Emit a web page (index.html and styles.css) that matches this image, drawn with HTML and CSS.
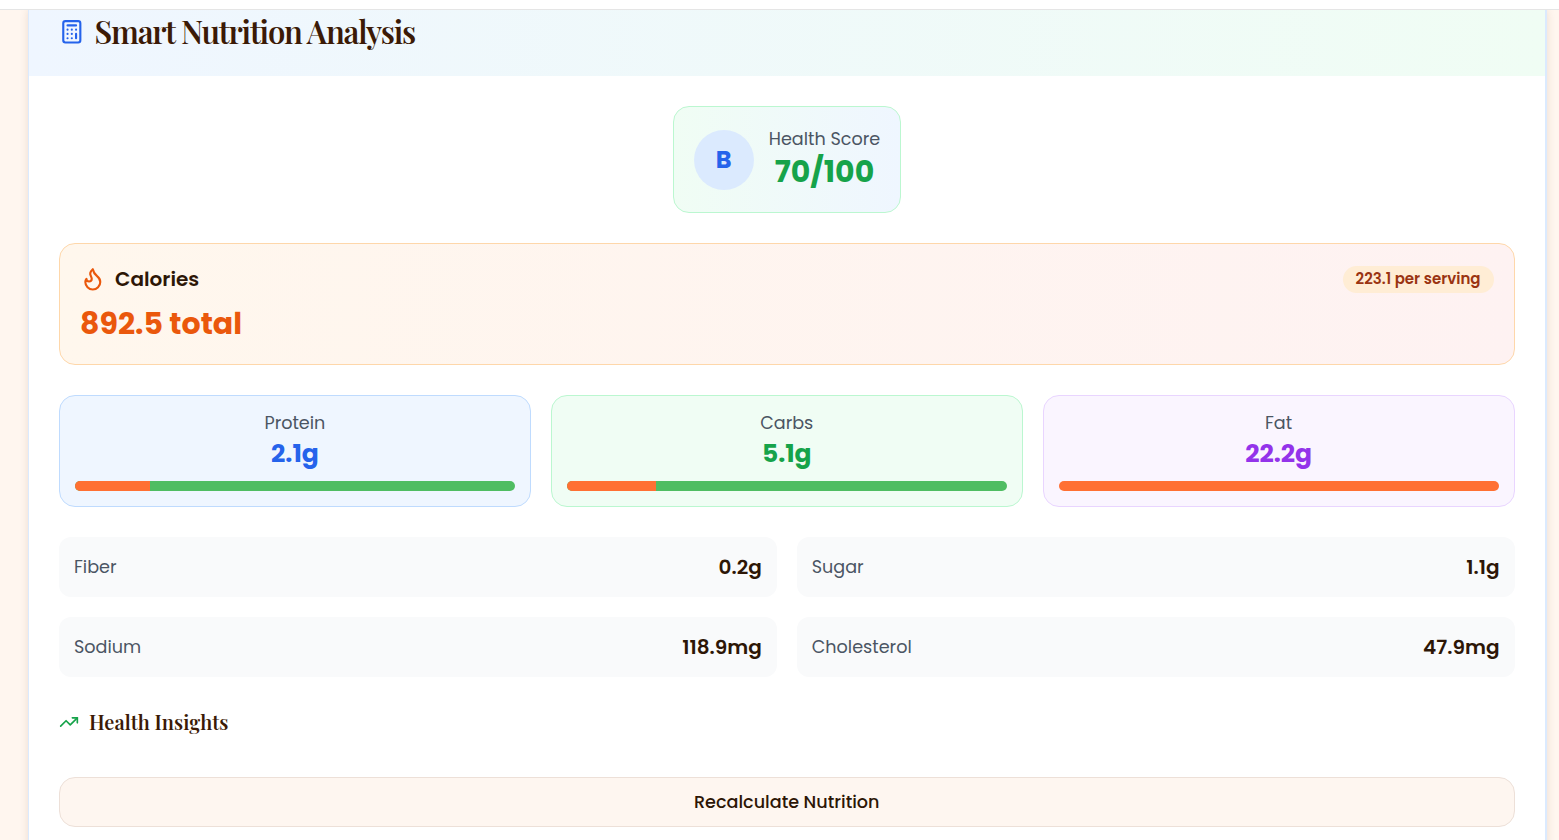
FILE: index.html
```html
<!DOCTYPE html>
<html lang="en">
<head>
  <meta charset="UTF-8" />
  <meta name="viewport" content="width=device-width, initial-scale=1" />
  <title>Smart Nutrition Analysis</title>
  <link rel="stylesheet" href="styles.css">
</head>
<body>
  <div class="topbar"></div>
  <main class="page">
    <section class="card">
      <header class="card-head">
        <svg class="calc-icon" viewBox="0 0 24 24" fill="none" stroke="currentColor" stroke-width="2" stroke-linecap="round" stroke-linejoin="round">
          <rect x="4" y="2" width="16" height="20" rx="2"/>
          <line x1="8" y1="6" x2="16" y2="6"/>
          <line x1="16" y1="14" x2="16" y2="18"/>
          <path d="M16 10h.01"/><path d="M12 10h.01"/><path d="M8 10h.01"/>
          <path d="M12 14h.01"/><path d="M8 14h.01"/><path d="M12 18h.01"/><path d="M8 18h.01"/>
        </svg>
        <h2>Smart Nutrition Analysis</h2>
      </header>

      <div class="card-body">
        <div class="score-wrap">
          <div class="score">
            <div class="grade">B</div>
            <div class="score-text">
              <div class="score-label">Health Score</div>
              <div class="score-value">70/100</div>
            </div>
          </div>
        </div>

        <div class="calories">
          <div class="calories-top">
            <div class="calories-title">
              <svg class="flame-icon" viewBox="0 0 24 24" fill="none" stroke="currentColor" stroke-width="2" stroke-linecap="round" stroke-linejoin="round">
                <path d="M8.5 14.5A2.5 2.5 0 0 0 11 12c0-1.38-.5-2-1-3-1.072-2.143-.224-4.054 2-6 .5 2.5 2 4.9 4 6.5 2 1.6 3 3.5 3 5.5a7 7 0 1 1-14 0c0-1.153.433-2.294 1-3a2.5 2.5 0 0 0 2.5 2.5z"/>
              </svg>
              <span>Calories</span>
            </div>
            <span class="pill">223.1 per serving</span>
          </div>
          <div class="calories-total">892.5 total</div>
        </div>

        <div class="macros">
          <div class="macro macro-protein">
            <div class="macro-label">Protein</div>
            <div class="macro-value">2.1g</div>
            <div class="bar"><div class="bar-fill" style="width: 17%"></div></div>
          </div>
          <div class="macro macro-carbs">
            <div class="macro-label">Carbs</div>
            <div class="macro-value">5.1g</div>
            <div class="bar"><div class="bar-fill" style="width: 20.3%"></div></div>
          </div>
          <div class="macro macro-fat">
            <div class="macro-label">Fat</div>
            <div class="macro-value">22.2g</div>
            <div class="bar"><div class="bar-fill" style="width: 100%"></div></div>
          </div>
        </div>

        <div class="details">
          <div class="detail"><span class="detail-name">Fiber</span><span class="detail-value">0.2g</span></div>
          <div class="detail"><span class="detail-name">Sugar</span><span class="detail-value">1.1g</span></div>
          <div class="detail"><span class="detail-name">Sodium</span><span class="detail-value">118.9mg</span></div>
          <div class="detail"><span class="detail-name">Cholesterol</span><span class="detail-value">47.9mg</span></div>
        </div>

        <div class="insights">
          <svg class="trend-icon" viewBox="0 0 24 24" fill="none" stroke="currentColor" stroke-width="2" stroke-linecap="round" stroke-linejoin="round">
            <polyline points="22 7 13.5 15.5 8.5 10.5 2 17"/>
            <polyline points="16 7 22 7 22 13"/>
          </svg>
          <h3>Health Insights</h3>
        </div>

        <button class="recalc">Recalculate Nutrition</button>
      </div>
    </section>
  </main>
</body>
</html>
```

FILE: styles.css
```css
* {
  box-sizing: border-box;
}
html, body {
  height: 100%;
}
body {
  margin: 0;
  overflow: hidden;
  background: #fff;
  font-family: Poppins, Inter, "Noto Sans", sans-serif;
  color: #2d1606;
}
.topbar {
  height: 10px;
  background: #fff;
  border-bottom: 1px solid #e5e5e5;
}
.page {
  height: 830px;
  padding: 0 12.5px 0 28px;
  background: #fff6ef;
  overflow: hidden;
}
.card {
  background: #fff;
  border-left: 1px solid #dbeafe;
  border-right: 2px solid #dbeafe;
  box-shadow: 0 0 8px rgba(120, 70, 30, 0.14);
}
.card-head {
  display: flex;
  align-items: flex-start;
  gap: 10px;
  height: 66px;
  padding: 5px 30px 0;
  background: linear-gradient(90deg, #eff6ff, #f0fdf4);
}
.calc-icon {
  width: 25.6px;
  height: 25.6px;
  margin-top: 4px;
  color: #2563eb;
  flex: none;
}
.card-head h2 {
  margin: 0;
  font-family: "Playfair Display", "Liberation Serif", serif;
  font-size: 31px;
  line-height: 32px;
  font-weight: 600;
  letter-spacing: -1.2px;
  white-space: nowrap;
  color: #3b1a06;
}
.card-body {
  padding: 30px 30px 30px;
}
.score-wrap {
  display: flex;
  justify-content: center;
  margin-bottom: 30px;
}
.score {
  display: flex;
  align-items: center;
  gap: 15px;
  width: 228px;
  height: 107px;
  padding: 0 20px;
  border: 1px solid #bbf7d0;
  border-radius: 16px;
  background: linear-gradient(90deg, #f0fdf4, #eff6ff);
}
.grade {
  display: flex;
  align-items: center;
  justify-content: center;
  width: 60px;
  height: 60px;
  border-radius: 50%;
  background: #dbeafe;
  color: #2563eb;
  font-size: 24px;
  font-weight: 700;
  flex: none;
}
.score-text {
  flex: none;
  text-align: center;
  white-space: nowrap;
}
.score-label {
  font-size: 17.6px;
  line-height: 24px;
  margin-bottom: 1px;
  color: #4b5563;
}
.score-value {
  font-size: 30px;
  line-height: 40px;
  font-weight: 700;
  color: #16a34a;
}
.calories {
  height: 122px;
  padding: 20px;
  margin-bottom: 30px;
  border: 1px solid #fed7aa;
  border-radius: 16px;
  background: linear-gradient(90deg, #fff7ed, #fef2f2);
}
.calories-top {
  display: flex;
  align-items: center;
  justify-content: space-between;
}
.calories-title {
  display: flex;
  align-items: center;
  gap: 9.5px;
  font-size: 20px;
  line-height: 30px;
  font-weight: 600;
}
.flame-icon {
  width: 25.6px;
  height: 25.6px;
  color: #ea580c;
}
.pill {
  padding: 0 13px 2px;
  border-radius: 14px;
  background: #ffedd5;
  color: #9a3412;
  font-size: 15px;
  line-height: 25px;
  font-weight: 600;
}
.calories-total {
  margin-top: 12px;
  font-size: 30px;
  line-height: 36px;
  font-weight: 700;
  color: #ea580c;
}
.macros {
  display: grid;
  grid-template-columns: repeat(3, 1fr);
  gap: 20px;
  margin-bottom: 30px;
}
.macro {
  height: 112px;
  padding: 15px;
  border: 1px solid;
  border-radius: 16px;
  text-align: center;
}
.macro-protein {
  background: #eff6ff;
  border-color: #bfdbfe;
  color: #2563eb;
}
.macro-carbs {
  background: #f0fdf4;
  border-color: #bbf7d0;
  color: #16a34a;
}
.macro-fat {
  background: #faf5ff;
  border-color: #e9d5ff;
  color: #9333ea;
}
.macro-label {
  font-size: 17.6px;
  line-height: 24px;
  color: #4b5563;
}
.macro-value {
  font-size: 25px;
  line-height: 38px;
  font-weight: 700;
}
.bar {
  height: 10px;
  margin-top: 8px;
  border-radius: 5px;
  overflow: hidden;
  background: #4fbd62;
}
.bar-fill {
  height: 100%;
  background: #ff7033;
}
.details {
  display: grid;
  grid-template-columns: 1fr 1fr;
  gap: 20px;
  margin-bottom: 30px;
}
.detail {
  display: flex;
  align-items: center;
  justify-content: space-between;
  height: 60px;
  padding: 0 15px;
  border-radius: 12px;
  background: #f9fafb;
}
.detail-name {
  font-size: 17.6px;
  color: #4b5563;
}
.detail-value {
  font-size: 20px;
  font-weight: 600;
}
.insights {
  display: flex;
  align-items: center;
  gap: 10px;
  height: 32px;
  margin-bottom: 38px;
}
.trend-icon {
  width: 20px;
  height: 20px;
  margin-bottom: 2px;
  color: #16a34a;
}
.insights h3 {
  margin: 0 0 4px;
  font-family: "Playfair Display", "Liberation Serif", serif;
  font-size: 20px;
  font-weight: 600;
  color: #3b1a06;
}
.recalc {
  display: block;
  width: 100%;
  height: 50px;
  border: 1px solid #ede0d8;
  border-radius: 16px;
  background: #fef6f0;
  color: #2d1606;
  font-family: inherit;
  font-size: 17.6px;
  font-weight: 500;
}
```
